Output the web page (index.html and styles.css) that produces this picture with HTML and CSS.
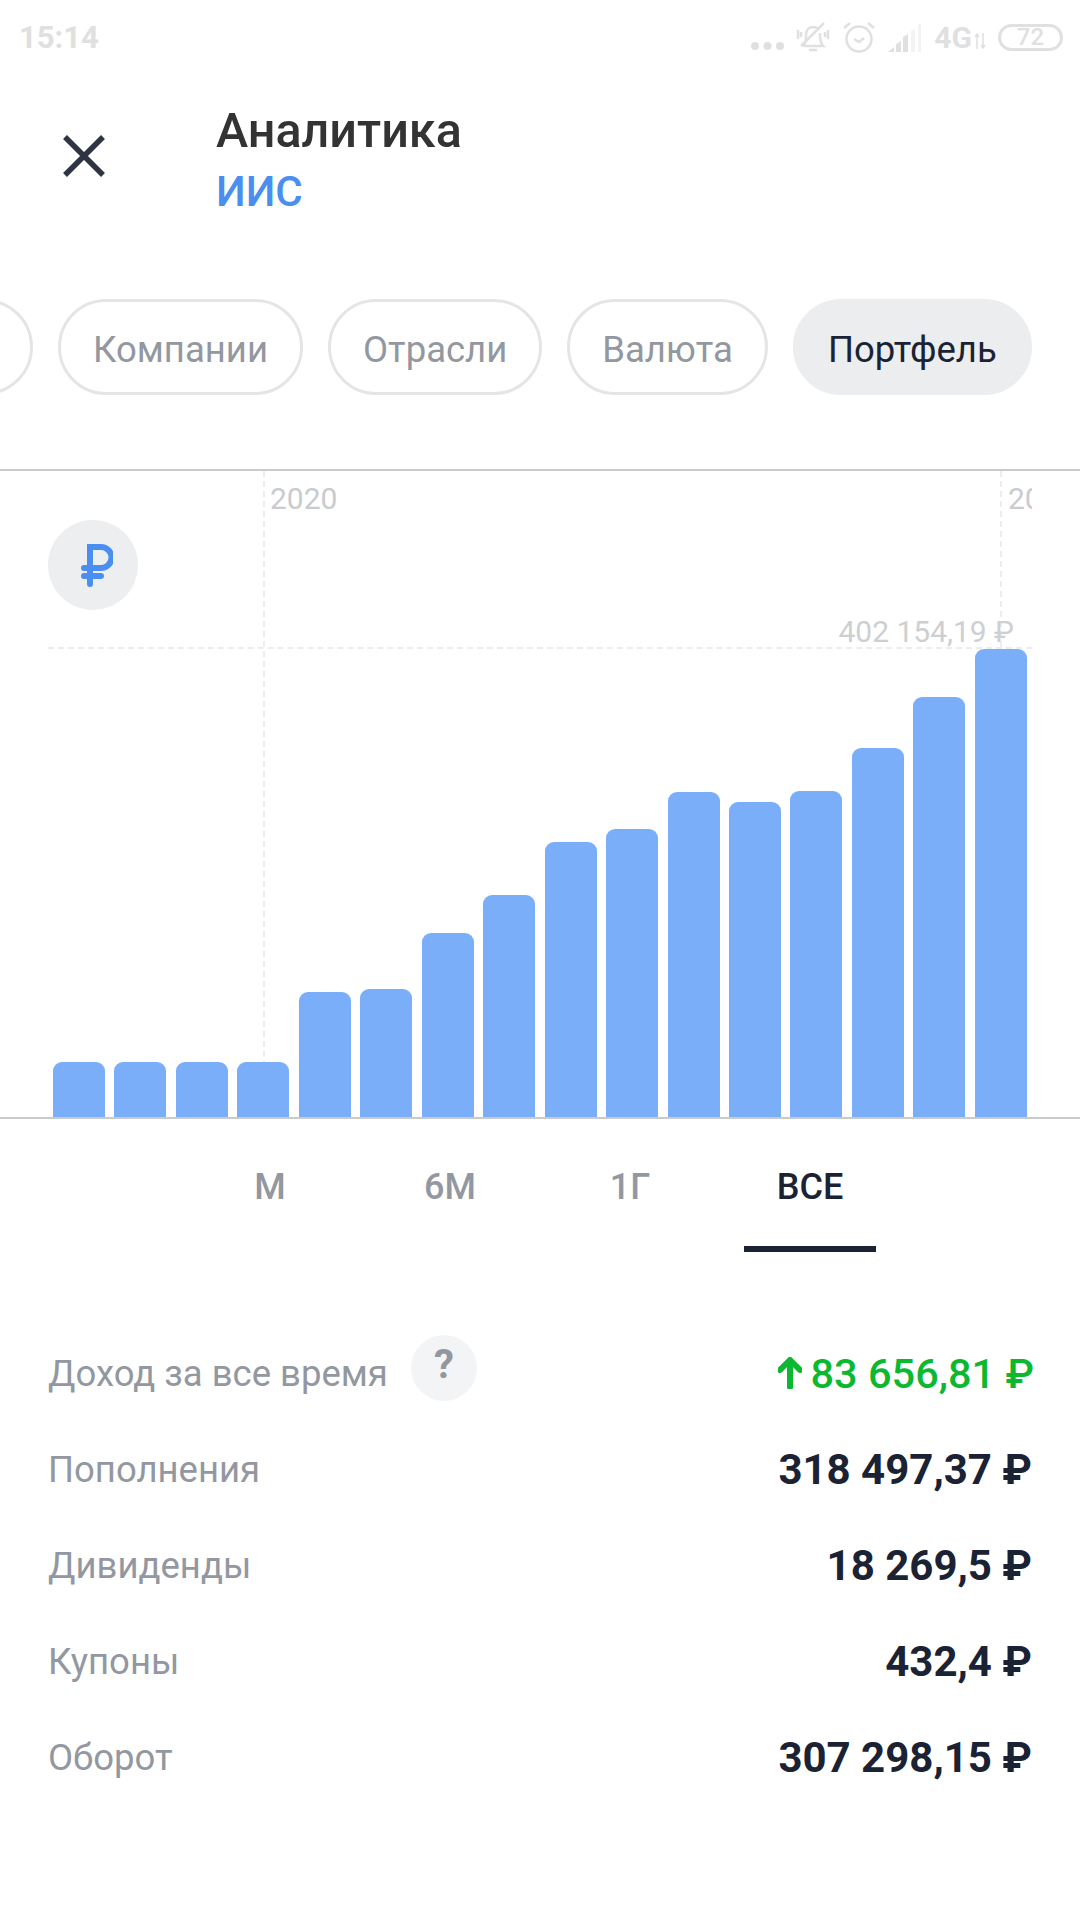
FILE: index.html
```html
<!DOCTYPE html>
<html lang="ru">
<head>
  <meta charset="UTF-8">
  <meta name="viewport" content="width=device-width, initial-scale=1.0">
  <title>Аналитика</title>
  <link rel="stylesheet" href="styles.css">
</head>
<body>
  <div class="status-bar">
    <span class="status-time">15:14</span>
    <div class="status-icons">
      <svg class="icon-dots" width="33" height="10" viewBox="0 0 33 10"><circle cx="4" cy="5" r="4"/><circle cx="16.500" cy="5" r="4"/><circle cx="29" cy="5" r="4"/></svg>
      <svg class="icon-line" width="34" height="34" viewBox="0 0 34 34"><path d="M7 26c3-3 3-6 3-11 0-5 3-8 7-8 2 0 4 1 5 2M24 13c0 5 0 10 3 13H7M13 30h8M5 26L28 3M2 10v9M5 12v5M32 10v9M29 12v5"/></svg>
      <svg class="icon-line" width="34" height="34" viewBox="0 0 34 34"><circle cx="17" cy="19" r="12.500"/><path d="M12 19l5 3 5-4M2 8l6-5M32 8l-6-5"/></svg>
      <svg class="icon-signal" width="34" height="30" viewBox="0 0 34 30"><path d="M0 30l6-5v5zM8 30v-8l5-3v11zM15 30V15l5-3v18z"/><path class="signal-off" d="M23 30V9l4-2v23zM30 30V2l3-1v29z"/></svg>
      <span class="status-net">4G</span>
      <svg class="icon-arrows" width="12" height="16" viewBox="0 0 12 16"><path d="M3 16V2M1 4l2-3 2 3M9 0v14M7 12l2 3 2-3"/></svg>
      <span class="status-battery">72</span>
    </div>
  </div>

  <header class="top-bar">
    <svg class="close-icon" width="42" height="42" viewBox="0 0 42 42"><path d="M2 2l38 38M40 2L2 40"/></svg>
    <div class="top-titles">
      <h1>Аналитика</h1>
      <div class="top-sub">ИИС</div>
    </div>
  </header>

  <div class="chips">
    <div class="chip chip-cut"></div>
    <div class="chip">Компании</div>
    <div class="chip">Отрасли</div>
    <div class="chip">Валюта</div>
    <div class="chip chip-active">Портфель</div>
  </div>

  <section class="chart">
    <div class="plot">
      <div class="guide-v guide-first"></div>
      <div class="guide-v guide-second"></div>
      <div class="guide-h"></div>
      <span class="year year-first">2020</span>
      <span class="year year-second">2021</span>
      <span class="max-label">402 154,19 ₽</span>
      <div class="currency">
        <svg width="32" height="44" viewBox="0 0 32 44"><path d="M9 41V4h11a10.500 10.500 0 0 1 0 21H3M3 33h17"/></svg>
      </div>
      <div class="bars">
        <div class="bar" style="height: 55px"></div>
        <div class="bar" style="height: 55px"></div>
        <div class="bar" style="height: 55px"></div>
        <div class="bar" style="height: 55px"></div>
        <div class="bar" style="height: 125px"></div>
        <div class="bar" style="height: 128px"></div>
        <div class="bar" style="height: 184px"></div>
        <div class="bar" style="height: 222px"></div>
        <div class="bar" style="height: 275px"></div>
        <div class="bar" style="height: 288px"></div>
        <div class="bar" style="height: 325px"></div>
        <div class="bar" style="height: 315px"></div>
        <div class="bar" style="height: 326px"></div>
        <div class="bar" style="height: 369px"></div>
        <div class="bar" style="height: 420px"></div>
        <div class="bar" style="height: 468px"></div>
      </div>
    </div>
  </section>

  <nav class="periods">
    <div class="period">М</div>
    <div class="period">6М</div>
    <div class="period">1Г</div>
    <div class="period period-active">ВСЕ</div>
  </nav>

  <section class="stats">
    <div class="stat">
      <div class="stat-name">Доход за все время <span class="help">?</span></div>
      <div class="stat-value stat-gain">
        <svg width="24" height="32" viewBox="0 0 24 32"><path d="M12 30V3M2 13L12 3l10 10"/></svg>
        83 656,81 ₽
      </div>
    </div>
    <div class="stat">
      <div class="stat-name">Пополнения</div>
      <div class="stat-value">318 497,37 ₽</div>
    </div>
    <div class="stat">
      <div class="stat-name">Дивиденды</div>
      <div class="stat-value">18 269,5 ₽</div>
    </div>
    <div class="stat">
      <div class="stat-name">Купоны</div>
      <div class="stat-value">432,4 ₽</div>
    </div>
    <div class="stat">
      <div class="stat-name">Оборот</div>
      <div class="stat-value">307 298,15 ₽</div>
    </div>
  </section>
</body>
</html>
```

FILE: styles.css
```css
body {
  font-family: Roboto, "Noto Sans", sans-serif;
  margin: 0;
  width: 1080px;
  height: 1920px;
  overflow: hidden;
  background-color: #fff;
  color: #1a2233;
}
.status-bar {
  display: flex;
  justify-content: space-between;
  align-items: center;
  height: 74px;
  padding: 0 17px 0 19px;
  color: #e0e0e0;
}
.status-time {
  font-size: 31px;
  font-weight: 700;
}
.status-icons {
  display: flex;
  align-items: center;
  gap: 12px;
}
.status-icons svg {
  flex: none;
}
.icon-dots {
  fill: #e0e0e0;
  margin-top: 18px;
}
.icon-line {
  fill: none;
  stroke: #e0e0e0;
  stroke-width: 2.500;
}
.icon-signal {
  fill: #e0e0e0;
}
.signal-off {
  fill: #f3f3f3;
}
.status-net {
  font-size: 30px;
  font-weight: 700;
  margin-right: -10px;
}
.icon-arrows {
  fill: none;
  stroke: #e0e0e0;
  stroke-width: 1.500;
  margin-top: 8px;
}
.status-battery {
  box-sizing: border-box;
  width: 65px;
  height: 27px;
  line-height: 21px;
  border: 3px solid #e0e0e0;
  border-radius: 14px;
  font-size: 24px;
  font-weight: 500;
  text-align: center;
}
.top-bar {
  display: flex;
  height: 126px;
  padding-left: 63px;
}
.close-icon {
  fill: none;
  stroke: #2e3443;
  stroke-width: 5.500;
  margin-top: 61px;
  flex: none;
}
.top-titles {
  margin-left: 111px;
  padding-top: 28px;
}
.top-titles h1 {
  margin: 0;
  font-size: 48.500px;
  font-weight: 500;
  line-height: 58px;
  color: #333;
}
.top-sub {
  font-size: 42px;
  font-weight: 500;
  line-height: 63px;
  color: #4a8ff0;
}
.chips {
  display: flex;
  gap: 25px;
  margin-top: 99px;
  overflow: hidden;
}
.chip {
  box-sizing: border-box;
  flex: none;
  height: 96px;
  padding: 0 32px;
  border: 3px solid #e3e5e7;
  border-radius: 48px;
  font-size: 36.500px;
  line-height: 95px;
  color: #93979f;
}
.chip-cut {
  width: 100px;
  margin-left: -67px;
}
.chip-active {
  border-color: #ebedef;
  background-color: #ebedef;
  color: #1a2233;
}
.chart {
  box-sizing: border-box;
  height: 650px;
  margin-top: 74px;
  padding: 0 48px;
  border-top: 2px solid #c9cacc;
  border-bottom: 2px solid #c9cacc;
}
.plot {
  position: relative;
  height: 100%;
  overflow: hidden;
}
.guide-v {
  position: absolute;
  top: 0;
  bottom: 0;
  border-left: 2px dashed #eceded;
}
.guide-first {
  left: 215px;
}
.guide-second {
  left: 952px;
}
.guide-h {
  position: absolute;
  top: 176px;
  left: 0;
  right: 0;
  border-top: 2px dashed #eceded;
}
.year {
  position: absolute;
  top: 10px;
  font-size: 30px;
  color: #c9cbcf;
}
.year-first {
  left: 222px;
}
.year-second {
  left: 960px;
}
.max-label {
  position: absolute;
  top: 143px;
  right: 18px;
  font-size: 30px;
  color: #cdcfd2;
}
.currency {
  position: absolute;
  top: 49px;
  left: 0;
  display: flex;
  align-items: center;
  justify-content: center;
  width: 90px;
  height: 90px;
  border-radius: 50%;
  background-color: #eceef0;
}
.currency svg {
  margin-left: 8px;
  fill: none;
  stroke: #4a8ff0;
  stroke-width: 6;
  stroke-linecap: round;
}
.bars {
  position: absolute;
  left: 5px;
  right: 5px;
  bottom: 0;
  display: flex;
  align-items: flex-end;
  justify-content: space-between;
}
.bar {
  width: 52px;
  border-radius: 9px 9px 0 0;
  background-color: #7aaef8;
}
.periods {
  display: flex;
  justify-content: center;
}
.period {
  position: relative;
  width: 180px;
  height: 133px;
  padding-top: 44px;
  box-sizing: border-box;
  font-size: 36px;
  font-weight: 500;
  line-height: 48px;
  text-align: center;
  color: #93979f;
}
.period-active {
  color: #1a2233;
}
.period-active::after {
  content: "";
  position: absolute;
  left: 24px;
  right: 24px;
  bottom: 0;
  height: 6px;
  background-color: #1a2233;
}
.stats {
  margin-top: 73px;
  padding: 0 48px;
}
.stat {
  display: flex;
  justify-content: space-between;
  align-items: center;
  height: 96px;
}
.stat-name {
  display: flex;
  align-items: center;
  gap: 23px;
  font-size: 36.500px;
  color: #93979f;
}
.help {
  width: 66px;
  height: 66px;
  margin-top: -10px;
  border-radius: 50%;
  font-size: 40px;
  font-weight: 700;
  line-height: 60px;
  text-align: center;
  background-color: #f3f4f5;
}
.stat-value {
  display: flex;
  align-items: center;
  gap: 8px;
  font-size: 42px;
  font-weight: 700;
}
.stat-gain {
  margin-right: -2px;
  font-size: 41.500px;
  font-weight: 500;
  color: #0cb82f;
}
.stat-gain svg {
  fill: none;
  stroke: #0cb82f;
  stroke-width: 6;
  stroke-linecap: round;
  stroke-linejoin: round;
}
```
